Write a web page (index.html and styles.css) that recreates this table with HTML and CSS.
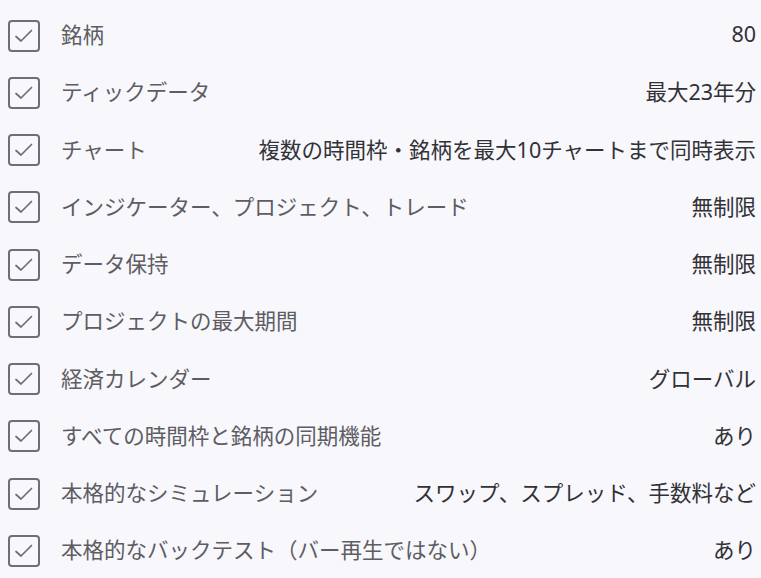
FILE: index.html
```html
<!DOCTYPE html>
<html lang="ja">
<head>
<meta charset="utf-8">
<link rel="stylesheet" href="styles.css">
</head>
<body>
<ul class="features">
  <li class="row"><span class="check"><svg viewBox="0 0 28 28"><path d="M6 14.5 L11 19 L21.5 8.5"/></svg></span><span class="label">銘柄</span><span class="value">80</span></li>
  <li class="row"><span class="check"><svg viewBox="0 0 28 28"><path d="M6 14.5 L11 19 L21.5 8.5"/></svg></span><span class="label">ティックデータ</span><span class="value">最大23年分</span></li>
  <li class="row"><span class="check"><svg viewBox="0 0 28 28"><path d="M6 14.5 L11 19 L21.5 8.5"/></svg></span><span class="label">チャート</span><span class="value">複数の時間枠・銘柄を最大10チャートまで同時表示</span></li>
  <li class="row"><span class="check"><svg viewBox="0 0 28 28"><path d="M6 14.5 L11 19 L21.5 8.5"/></svg></span><span class="label">インジケーター、プロジェクト、トレード</span><span class="value">無制限</span></li>
  <li class="row"><span class="check"><svg viewBox="0 0 28 28"><path d="M6 14.5 L11 19 L21.5 8.5"/></svg></span><span class="label">データ保持</span><span class="value">無制限</span></li>
  <li class="row"><span class="check"><svg viewBox="0 0 28 28"><path d="M6 14.5 L11 19 L21.5 8.5"/></svg></span><span class="label">プロジェクトの最大期間</span><span class="value">無制限</span></li>
  <li class="row"><span class="check"><svg viewBox="0 0 28 28"><path d="M6 14.5 L11 19 L21.5 8.5"/></svg></span><span class="label">経済カレンダー</span><span class="value">グローバル</span></li>
  <li class="row"><span class="check"><svg viewBox="0 0 28 28"><path d="M6 14.5 L11 19 L21.5 8.5"/></svg></span><span class="label">すべての時間枠と銘柄の同期機能</span><span class="value">あり</span></li>
  <li class="row"><span class="check"><svg viewBox="0 0 28 28"><path d="M6 14.5 L11 19 L21.5 8.5"/></svg></span><span class="label">本格的なシミュレーション</span><span class="value">スワップ、スプレッド、手数料など</span></li>
  <li class="row"><span class="check"><svg viewBox="0 0 28 28"><path d="M6 14.5 L11 19 L21.5 8.5"/></svg></span><span class="label">本格的なバックテスト（バー再生ではない）</span><span class="value">あり</span></li>
</ul>
</body>
</html>
```

FILE: styles.css
```css
html, body {
  margin: 0;
  padding: 0;
  background: #f7f7fc;
}
body {
  font-family: "Noto Sans", "Noto Sans CJK JP", sans-serif;
  font-size: 21.5px;
}
.features {
  list-style: none;
  margin: 0;
  padding: 7px 5px 0 8px;
  display: flex;
  flex-direction: column;
}
.row {
  height: 57.25px;
  display: flex;
  align-items: center;
}
.check {
  width: 32px;
  height: 32px;
  box-sizing: border-box;
  border: 2px solid #6e6e74;
  border-radius: 4px;
  flex: none;
  display: flex;
}
.check svg {
  width: 28px;
  height: 28px;
}
.check path {
  fill: none;
  stroke: #6e6e74;
  stroke-width: 1.7;
  stroke-linecap: round;
  stroke-linejoin: round;
}
.label,
.value {
  margin-bottom: 4px;
  white-space: nowrap;
}
.label {
  margin-left: 21px;
  color: #5d5d63;
  flex: 1;
}
.value {
  color: #323236;
  text-align: right;
}
```
